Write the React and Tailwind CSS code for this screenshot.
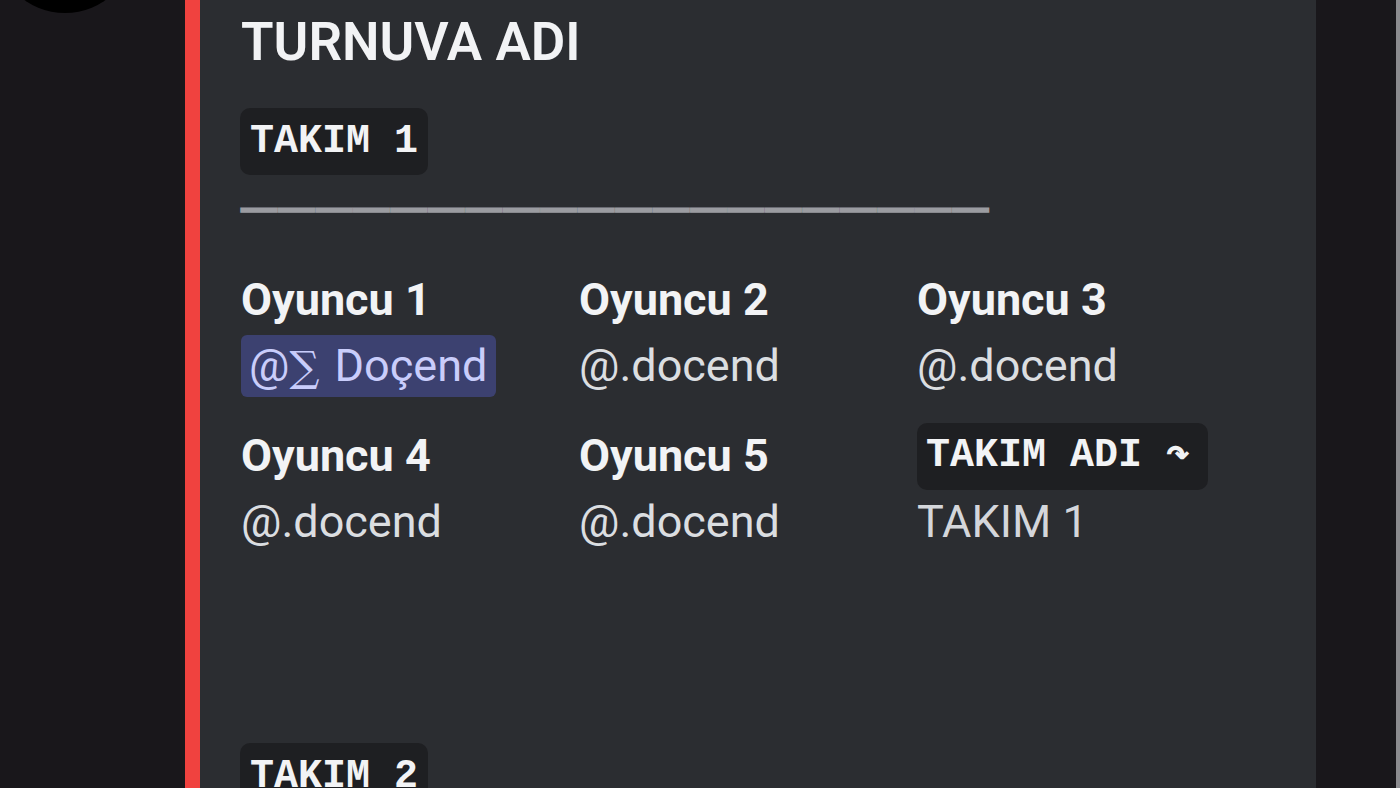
import React from 'react';

const players = [
  { name: 'Oyuncu 1', value: '@.docend', mention: true },
  { name: 'Oyuncu 2', value: '@.docend' },
  { name: 'Oyuncu 3', value: '@.docend' },
  { name: 'Oyuncu 4', value: '@.docend' },
  { name: 'Oyuncu 5', value: '@.docend' },
];

const Code = ({ children, className = '' }) => (
  <span
    className={`inline-flex items-center h-[67px] px-[10px] rounded-[10px] bg-[#1e1f22] text-[#f2f3f5] font-['Liberation_Mono',monospace] font-bold text-[40px] leading-none ${className}`}
  >
    {children}
  </span>
);

const Field = ({ name, value, mention }) => (
  <div className="flex flex-col">
    <div className="text-[45px] leading-[66px] font-bold text-[#f2f3f5] whitespace-nowrap">{name}</div>
    <div className="text-[45px] leading-[66px] text-[#dbdee1] whitespace-nowrap">
      {mention ? (
        <span className="inline-block bg-[#3c4170] text-[#c9cdfb] rounded-[6px] pl-[8px] pr-[9px] leading-[61px]">
          @<span className="font-['DejaVu_Serif',serif] text-[42px] mr-[4px]">∑</span> Doçend
        </span>
      ) : (
        value
      )}
    </div>
  </div>
);

const App = () => {
  return (
    <div className="w-[1400px] h-[788px] overflow-hidden bg-[#19171b] flex font-['Roboto',sans-serif]">
      <div className="w-[185px] shrink-0">
        <div className="w-[140px] h-[140px] rounded-full bg-black -ml-[5px] -mt-[127px]" />
      </div>
      <div className="w-[15px] shrink-0 bg-[#f0423f]" />

      <div className="w-[1116px] shrink-0 bg-[#2b2d31] pl-[40px] pt-[10px]">
        <div className="text-[53px] leading-[64px] font-semibold text-[#f2f3f5] pl-[1px]">TURNUVA ADI</div>

        <div className="mt-[34px]">
          <Code>TAKIM 1</Code>
        </div>

        <div className="mt-[13px] pl-[1px] font-['Liberation_Sans',sans-serif] text-[36px] tracking-[1.45px] leading-[40px] font-bold text-[#9b9ca1] [-webkit-text-stroke:1.5px_#9b9ca1] whitespace-nowrap">
          ————————————————————
        </div>

        <div className="mt-[39px] pl-[1px] grid grid-cols-[338px_338px_338px] gap-y-[24px]">
          {players.map((p) => (
            <Field key={p.name} {...p} />
          ))}
          <div className="flex flex-col">
            <div className="h-[66px] flex items-center">
              <Code className="pl-[9px] pr-[18px]">TAKIM ADI ↷</Code>
            </div>
            <div className="text-[45px] leading-[66px] text-[#d4d6db] whitespace-nowrap">TAKIM 1</div>
          </div>
        </div>

        <div className="mt-[188px]">
          <Code>TAKIM 2</Code>
        </div>
      </div>

      <div className="flex-1" />
      <div className="w-[4px] shrink-0 bg-[#8c8c90]" />
    </div>
  );
};

export default App;
